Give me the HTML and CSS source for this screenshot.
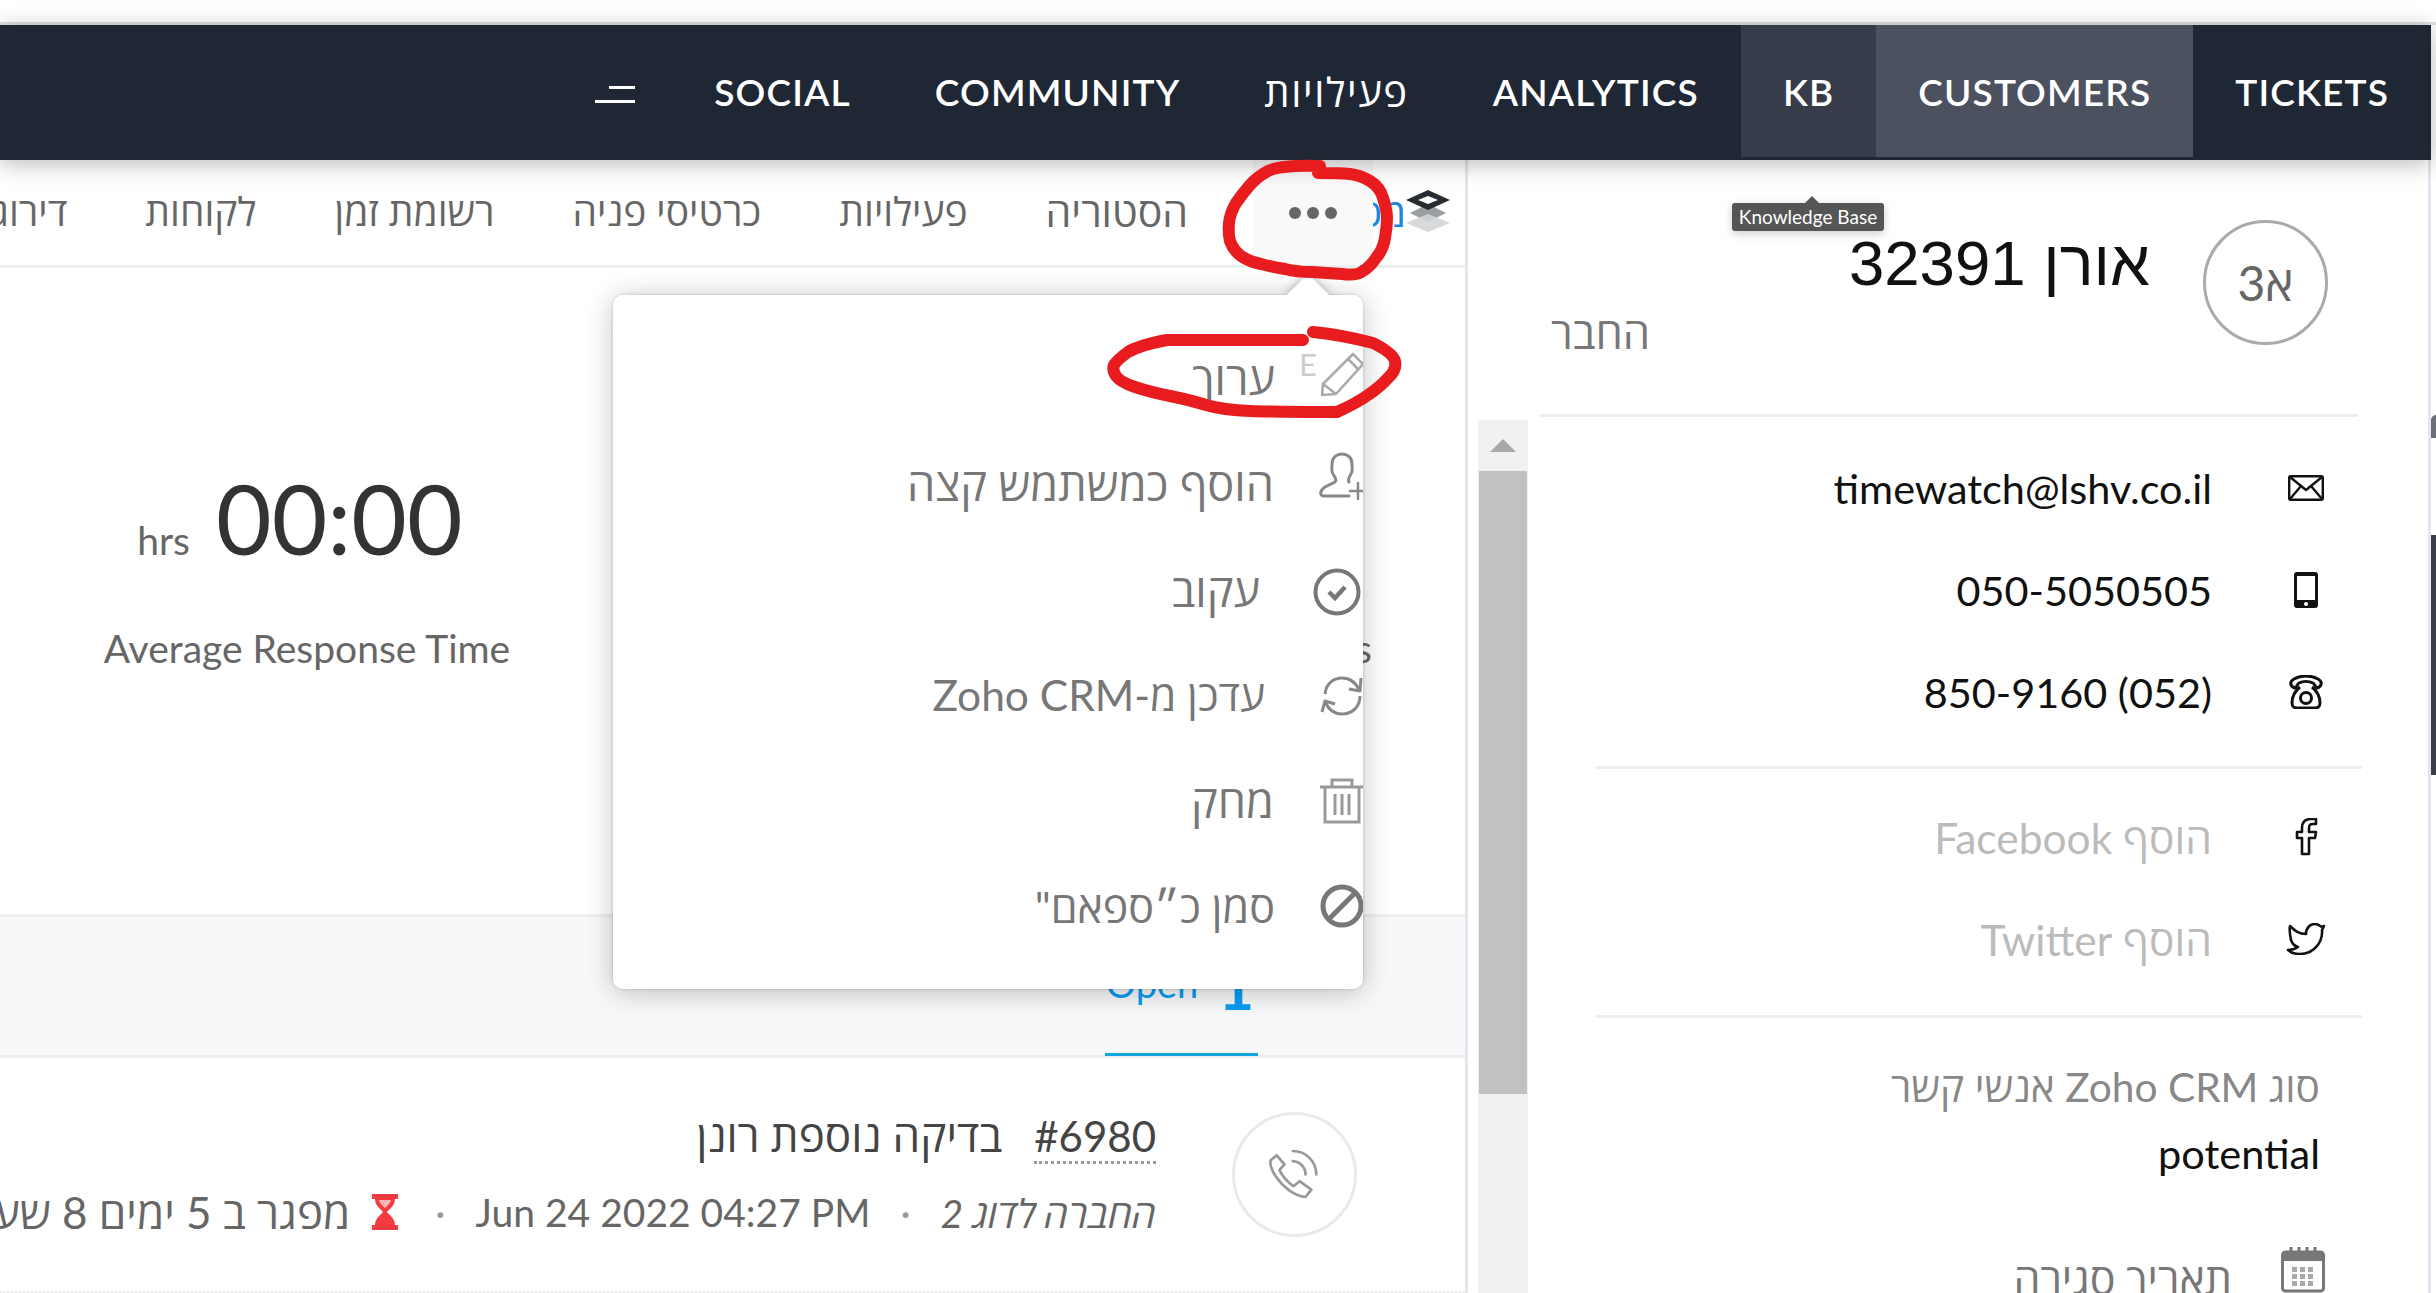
FILE: index.html
```html
<!DOCTYPE html>
<html lang="he">
<head>
<meta charset="utf-8">
<title>Customers</title>
<link rel="stylesheet" href="styles.css">
</head>
<body>
<div class="page">
  <div class="browser-top"></div>
  <nav class="nav">
    <div class="nav-item nav-burger"><span class="burger"><i></i><i></i></span></div>
    <div class="nav-item">SOCIAL</div>
    <div class="nav-item">COMMUNITY</div>
    <div class="nav-item nav-he" dir="rtl">פעילויות</div>
    <div class="nav-item">ANALYTICS</div>
    <div class="nav-item nav-hover">KB</div>
    <div class="nav-item nav-active">CUSTOMERS</div>
    <div class="nav-item">TICKETS</div>
  </nav>
  <div class="layout">
    <main class="main">
      <div class="tabs">
        <div class="tab" dir="rtl">דירוג</div>
        <div class="tab" dir="rtl">לקוחות</div>
        <div class="tab" dir="rtl">רשומת זמן</div>
        <div class="tab" dir="rtl">כרטיסי פניה</div>
        <div class="tab" dir="rtl">פעילויות</div>
        <div class="tab tab-last" dir="rtl">הסטוריה</div>
        <div class="tab-more"><i></i><i></i><i></i></div>
        <div class="tab-clipped" dir="rtl">מכ</div>
        <svg class="stack" viewBox="0 0 44 42" width="44" height="42"><path d="M22 14 40 23 22 32 4 23Z" fill="#9a9ea3"/><path d="M22 24 44 33 22 42 0 33Z" fill="#d3d5d7" opacity=".9"/><path d="M22 0 44 10 22 20 0 10Z" fill="#262c33"/><path d="M22 6 32 10 22 14 12 10Z" fill="#fff"/></svg>
      </div>
      <section class="stats">
        <div class="stat">
          <div class="stat-value"><span class="stat-unit">hrs</span><span class="stat-num">00:00</span></div>
          <div class="stat-label">Average Response Time</div>
        </div>
        <div class="stat stat-hidden">
          <div class="stat-value"></div>
          <div class="stat-label">Tickets</div>
        </div>
      </section>
      <div class="filters">
        <div class="filter-tab"><span class="filter-name">Open</span><span class="filter-count">1</span></div>
      </div>
      <div class="ticket">
        <div class="ticket-text" dir="rtl">
          <div class="ticket-title"><span class="ticket-id" dir="ltr">#6980</span><span class="ticket-subject">בדיקה נוספת רונן</span></div>
          <div class="ticket-meta">
            <em>החברה לדוג 2</em><span class="dot">·</span>
            <span dir="ltr">Jun 24 2022 04:27 PM</span><span class="dot">·</span>
            <svg class="hourglass" viewBox="0 0 26 36" width="26" height="36"><path d="M0 0H26V5H23C23 12 17 15 15 18 17 21 23 24 23 31H26V36H0V31H3C3 24 9 21 11 18 9 15 3 12 3 5H0Z" fill="#f53b3f"/><path d="M7 6H19C18 10 15 12 13 14 11 12 8 10 7 6Z" fill="#fbb6b6"/></svg>
            <span class="overdue">מפגר ב 5 ימים 8 שעות</span>
          </div>
        </div>
        <div class="ticket-channel">
          <svg viewBox="140 140 170 170" width="57" height="57" fill="none" stroke="#999" stroke-width="8" stroke-linejoin="round" stroke-linecap="round"><path d="M172 168 155 182C150 190 155 210 170 232 190 262 225 290 258 292L275 270 240 245 222 260C205 248 190 232 180 212L195 195Z"/><path d="M220 155A70 70 0 0 1 290 225M220 185A40 40 0 0 1 258 225"/></svg>
        </div>
      </div>
    </main>
    <aside class="side">
      <header class="side-head">
        <div class="side-titles">
          <div class="side-name" dir="rtl">אורן 32391</div>
          <div class="side-role" dir="rtl">החבר</div>
        </div>
        <div class="avatar" dir="rtl">א3</div>
      </header>
      <div class="side-body">
        <div class="scrollbar"><div class="scroll-up"></div><div class="scroll-thumb"></div></div>
        <div class="side-content">
          <div class="info-group">
            <div class="info-row"><span>timewatch@lshv.co.il</span>
              <svg class="info-icon" viewBox="0 0 36 26" width="36" height="26" fill="none" stroke="#111" stroke-width="2.4" stroke-linejoin="round"><rect x="1.2" y="1.2" width="33.6" height="23.6" rx="1.5"/><path d="M2 2 18 15 34 2M2 24 13 11M34 24 23 11"/></svg></div>
            <div class="info-row"><span>050-5050505</span>
              <svg class="info-icon" viewBox="0 0 24 36" width="24" height="36"><path fill-rule="evenodd" d="M3 0H21A3 3 0 0 1 24 3V33A3 3 0 0 1 21 36H3A3 3 0 0 1 0 33V3A3 3 0 0 1 3 0ZM3 4V28H21V4Z" fill="#111"/><circle cx="12" cy="32" r="2" fill="#fff"/></svg></div>
            <div class="info-row"><span dir="rtl">(052) 850-9160</span>
              <svg class="info-icon" viewBox="0 0 34 34" width="34" height="34" fill="none" stroke="#111" stroke-width="3"><path d="M6 13C0 11 1 6 5 4 12 0 22 0 29 4 33 6 34 11 28 13 25 11 26 9 24 8 20 6 14 6 10 8 8 9 9 11 6 13Z"/><path d="M11 12C6 16 3 22 3 28 3 31 5 33 8 33H26C29 33 31 31 31 28 31 22 28 16 23 12"/><circle cx="17" cy="23" r="5.5"/></svg></div>
          </div>
          <div class="info-group info-social">
            <div class="info-row muted"><span dir="rtl">הוסף Facebook</span>
              <svg class="info-icon" viewBox="0 0 22 38" width="22" height="38" fill="none" stroke="#111" stroke-width="2.6" stroke-linejoin="round"><path d="M7 36H14V20H20L21 14H14V10C14 7 15 6 18 6H21V1H16C10 1 7 4 7 10V14H2V20H7Z"/></svg></div>
            <div class="info-row muted"><span dir="rtl">הוסף Twitter</span>
              <svg class="info-icon" viewBox="0 0 38 32" width="38" height="32" fill="none" stroke="#111" stroke-width="2.6" stroke-linejoin="round"><path d="M3 3C8 8 12 11 19 11 19 5 23 1 28 1 31 1 33 3 35 4L37 3 35 7C36 20 26 31 13 31 8 31 4 30 1 27 5 27 8 26 11 24 7 23 5 20 4 17 3 12 2 7 3 3Z"/></svg></div>
          </div>
          <div class="info-fields" dir="rtl">
            <div class="field-label">סוג Zoho CRM אנשי קשר</div>
            <div class="field-value">potential</div>
          </div>
          <div class="info-date">
            <span dir="rtl">תאריך סגירה</span>
            <svg class="cal" viewBox="0 0 44 46" width="44" height="46"><rect x="1.5" y="5" width="41" height="39" rx="3" fill="none" stroke="#777" stroke-width="3"/><rect x="1.5" y="5" width="41" height="9" fill="#777"/><path d="M10 0V9M18 0V9M26 0V9M34 0V9" stroke="#777" stroke-width="3"/><path d="M11 20h5v5h-5zM19 20h5v5h-5zM27 20h5v5h-5zM11 27h5v5h-5zM19 27h5v5h-5zM27 27h5v5h-5zM11 34h5v5h-5zM19 34h5v5h-5zM27 34h5v5h-5z" fill="#aaa"/></svg>
          </div>
        </div>
      </div>
    </aside>
  </div>

  <div class="tooltip">Knowledge Base</div>

  <div class="menu">
    <div class="menu-arrow"></div>
    <div class="menu-body">
      <div class="menu-item" dir="rtl">
        <svg class="menu-icon icon-edit" viewBox="0 0 47 47" width="47" height="47" fill="none" stroke="#aaa" stroke-width="2.6" stroke-linejoin="round"><path d="M4 33 34 3 44 13 17 43 3 44Z"/><path d="M29 8 39 18M4 33 17 43"/></svg>
        <span>ערוך</span><span class="menu-key">E</span>
      </div>
      <div class="menu-item" dir="rtl">
        <svg class="menu-icon icon-user" viewBox="0 0 48 48" width="48" height="48" fill="none" stroke="#888" stroke-width="3" stroke-linecap="round"><path d="M31 44H6C1 44 2 38 7 35L17 30C19 28 17 25 15 22 13 19 14 17 14 12 14 5 19 2 24 2 29 2 34 5 34 12 34 17 35 19 33 22 31 25 30 28 31 30"/><path d="M40 31V47M32 39H48" stroke-width="2.5"/></svg>
        <span>הוסף כמשתמש קצה</span>
      </div>
      <div class="menu-item item-follow" dir="rtl">
        <svg class="menu-icon icon-check" viewBox="0 0 48 48" width="48" height="48" fill="none" stroke="#777" stroke-width="4"><circle cx="24" cy="24" r="21.5"/><path d="M16 24 22 30 32 19" stroke-width="4.5"/></svg>
        <span>עקוב</span>
      </div>
      <div class="menu-item item-sync" dir="rtl">
        <svg class="menu-icon icon-low" viewBox="0 0 48 48" width="48" height="48" fill="none" stroke="#888" stroke-width="3"><path d="M7 22C8 12 15 6 24 6 32 6 38 11 41 18"/><path d="M42 24C42 35 34 42 24 42 16 42 10 37 8 31"/><path d="M43 6 42 19 31 17M4 40 7 29 17 32" stroke-linejoin="round"/></svg>
        <span>עדכן מ-Zoho CRM</span>
      </div>
      <div class="menu-item" dir="rtl">
        <svg class="menu-icon icon-low" viewBox="0 0 48 48" width="48" height="48" fill="none" stroke="#999" stroke-width="3"><path d="M2 9H46M14 9V2H34V9M7 9V44H41V9"/><path d="M17 16V37M24 16V37M31 16V37"/></svg>
        <span>מחק</span>
      </div>
      <div class="menu-item item-spam" dir="rtl">
        <svg class="menu-icon" viewBox="0 0 48 48" width="48" height="48" fill="none" stroke="#777" stroke-width="5"><circle cx="24" cy="24" r="19"/><path d="M11 37 37 11"/></svg>
        <span>סמן כ״ספאם"</span>
      </div>
    </div>
  </div>

  <div class="edge-curve"></div>
  <div class="edge-bar"></div>

  <svg class="ink" viewBox="0 0 2436 1293" width="2436" height="1293" fill="none" stroke="#e81c1e" stroke-width="12" stroke-linecap="round" stroke-linejoin="round">
    <path d="M1320 166Q1280 165 1268 171Q1257 177 1250 185Q1243 193 1236 203Q1230 213 1229 223Q1228 233 1230 241Q1233 250 1241 256Q1250 262 1261 264Q1273 267 1285 269Q1297 272 1312 272Q1327 273 1342 274Q1357 276 1363 271Q1370 267 1376 258Q1383 250 1385 238Q1387 227 1387 218Q1387 210 1383 198Q1380 187 1370 181Q1360 175 1350 174Q1340 173 1318 173"/>
    <path d="M1303 340L1167 340Q1140 345 1128 352Q1117 360 1114 365Q1112 370 1116 376Q1120 382 1135 387Q1150 392 1170 396Q1190 400 1206 405Q1223 410 1250 411Q1277 412 1337 412Q1357 403 1368 395Q1380 387 1388 378Q1397 370 1395 361Q1393 353 1373 343Q1343 335 1313 332"/>
  </svg>
</div>
</body>
</html>
```

FILE: styles.css
```css
* { box-sizing: border-box; }
html, body { margin: 0; padding: 0; background: #fff; }
body { font-family: Lato, "Open Sans", "Liberation Sans", sans-serif; color: #666; }
.page { position: relative; width: 2436px; height: 1293px; overflow: hidden; }

.browser-top { height: 25px; border-bottom: 3px solid #dfe1e3; background: #fff; }

.nav { position: relative; z-index: 2; display: flex; justify-content: flex-end; width: 2431px; height: 135px; background: #1f2735; box-shadow: 0 4px 22px rgba(0,0,0,.28); }
.nav-item { height: 132px; padding: 0 42px; display: flex; align-items: center; color: #fff; font-size: 37px; font-weight: 600; letter-spacing: 1.15px; white-space: nowrap; }
.nav-he { font-size: 40px; font-weight: 500; letter-spacing: 1.6px; }
.nav-hover { background: #363c49; }
.nav-active { background: #4b515e; }
.nav-burger { padding: 0 37px 0 0; }
.burger { display: flex; flex-direction: column; align-items: flex-end; gap: 11px; width: 40px; margin-top: 6px; }
.burger i { display: block; height: 3px; background: #fff; }
.burger i:first-child { width: 26px; }
.burger i:last-child { width: 40px; }

.layout { display: flex; width: 2431px; height: 1133px; }
.main { width: 1468px; flex: none; overflow: hidden; border-right: 3px solid #e3e6ee; }

.tabs { display: flex; justify-content: flex-end; align-items: center; height: 108px; padding-right: 15px; border-bottom: 3px solid #eee; }
.tab { flex: none; margin-right: 78px; font-size: 39px; color: #666; white-space: nowrap; padding-bottom: 4px; }
.tab-last { margin-right: 65px; font-size: 41px; }
.tab-more { flex: none; display: flex; align-items: center; justify-content: center; gap: 6px; width: 120px; height: 105px; background: #f9f9f9; }
.tab-more i { display: block; width: 12px; height: 12px; border-radius: 50%; background: #666; }
.tab-clipped { flex: none; width: 33px; overflow: hidden; font-size: 39px; color: #1a86e0; line-height: 1; white-space: nowrap; }
.stack { flex: none; margin-top: -4px; }

.stats { display: flex; justify-content: space-between; height: 646px; }
.stat { flex: none; width: 614px; text-align: center; padding-top: 187px; }
.stat-value { display: flex; justify-content: center; align-items: baseline; gap: 26px; height: 125px; padding-right: 14px; }
.stat-unit { font-size: 39px; color: #666; }
.stat-num { font-size: 96px; line-height: 125px; color: #333; }
.stat-label { margin-top: 43px; font-size: 39px; color: #666; line-height: 50px; }
.stat-hidden { width: auto; margin-right: 93px; text-align: right; }

.filters { display: flex; justify-content: flex-end; height: 144px; padding-right: 207px; background: #f7f8fa; border-top: 3px solid #eee; border-bottom: 3px solid #eee; }
.filter-tab { display: flex; align-items: flex-end; justify-content: center; gap: 20px; width: 153px; height: 139px; padding: 0 3px 45px 0; border-bottom: 3px solid #12a5e0; color: #0a9cf0; margin-bottom: -2px; }
.filter-name { font-size: 38px; line-height: 36px; margin-bottom: 7px; }
.filter-count { font-size: 62px; font-weight: 700; line-height: 48px; margin-bottom: -2px; }

.ticket { display: flex; justify-content: flex-end; gap: 76px; height: 235px; padding: 54px 108px 0 0; border-bottom: 2px dotted #e8e8e8; }
.ticket-text { flex: none; width: 1156px; margin-top: -3px; }
.ticket-title { display: flex; gap: 32px; align-items: baseline; line-height: 52px; color: #444; }
.ticket-id { font-size: 42px; border-bottom: 3px dotted #999; line-height: 44px; padding-bottom: 3px; }
.ticket-subject { font-size: 44px; }
.ticket-meta { display: flex; align-items: center; gap: 30px; margin-top: 18px; font-size: 39px; color: #666; white-space: nowrap; }
.ticket-meta em { font-style: italic; }
.ticket-meta .dot { color: #999; }
.hourglass { flex: none; margin-left: -8px; margin-right: 7px; }
.overdue { flex: none; font-size: 44px; }
.ticket-channel { flex: none; display: flex; align-items: center; justify-content: center; width: 125px; height: 125px; border: 3px solid #eaeaea; border-radius: 50%; }

.side { flex: 1; min-width: 0; border-right: 3px solid #e3e6ee; display: flex; flex-direction: column; }
.side-head { flex: none; display: flex; height: 257px; margin: 0 70px 0 72px; padding: 60px 30px 0 11px; border-bottom: 3px solid #eee; }
.side-titles { flex: 1; }
.side-name { font-family: "Liberation Sans", sans-serif; font-size: 63.5px; line-height: 70px; margin-top: 8px; color: #111; padding-right: 53px; }
.side-role { width: max-content; margin-top: 9px; font-size: 43.5px; color: #777; line-height: 50px; }
.avatar { flex: none; display: flex; align-items: center; justify-content: center; width: 125px; height: 125px; border: 3px solid #aaa; border-radius: 50%; font-size: 48px; color: #666; }

.side-body { flex: 1; display: flex; min-height: 0; padding-left: 10px; }
.scrollbar { flex: none; width: 50px; margin-top: 3px; background: #f1f1f1; padding: 0 1px; }
.scroll-up { height: 51px; position: relative; }
.scroll-up::after { content: ""; position: absolute; left: 11px; top: 19px; border-left: 13px solid transparent; border-right: 13px solid transparent; border-bottom: 13px solid #a8a8a8; }
.scroll-thumb { height: 623px; background: #c1c1c1; }

.side-content { flex: 1; min-width: 0; padding: 20px 66px 0 68px; }
.info-group { padding-bottom: 23px; }
.info-social { border-top: 3px solid #eee; padding-top: 17px; padding-bottom: 25px; }
.info-row { display: flex; justify-content: flex-end; align-items: center; height: 102px; padding-right: 31px; font-size: 41.4px; color: #111; white-space: nowrap; }
.info-row > span { margin-right: 69px; }
.info-row.muted { color: #bbb; font-size: 42.5px; }
.info-icon { flex: none; width: 50px; }

.info-fields { border-top: 3px solid #eee; padding: 44px 42px 0 0; }
.field-label { font-size: 40.7px; line-height: 50px; color: #888; }
.field-value { margin-top: 16px; font-size: 41.5px; line-height: 50px; color: #111; }
.info-date { display: flex; justify-content: flex-end; align-items: flex-start; gap: 49px; padding: 69px 37px 0 0; font-size: 43px; color: #777; }
.info-date span { margin-top: 2px; }
.cal { flex: none; }

.tooltip { position: absolute; z-index: 5; left: 1732px; top: 203px; width: 152px; height: 28px; background: #555; border-radius: 3px; color: #fff; font-size: 19px; line-height: 27px; text-align: center; box-shadow: 0 3px 10px rgba(0,0,0,.2); }
.tooltip::before { content: ""; position: absolute; left: 73px; top: -7px; border-left: 7px solid transparent; border-right: 7px solid transparent; border-bottom: 7px solid #555; }

.menu { position: absolute; z-index: 4; left: 613px; top: 295px; width: 750px; height: 694px; border-radius: 10px; box-shadow: 0 3px 28px rgba(0,0,0,.24), 0 0 3px rgba(0,0,0,.2); }
.menu-body { position: relative; height: 100%; padding-top: 30px; background: #fff; border-radius: 10px; overflow: hidden; }
.menu-arrow { position: absolute; left: 680px; top: -15px; width: 30px; height: 30px; background: #fff; transform: rotate(45deg); box-shadow: 0 0 12px rgba(0,0,0,.3); }
.menu-item { position: relative; display: flex; align-items: center; gap: 44px; height: 105.7px; font-size: 45px; color: #777; white-space: nowrap; }
.menu-icon { flex: none; margin-right: -3px; }
.icon-edit { margin-top: -6px; }
.icon-user { margin-top: -16px; }
.icon-check { margin-top: 6px; margin-right: 2px; }
.icon-low { margin-top: 3px; }
.item-follow { gap: 53px; }
.item-sync { gap: 53px; font-size: 42.5px; }
.item-spam { gap: 43px; font-size: 43px; }
.menu-key { position: absolute; right: 46px; top: 20px; font-size: 31px; color: #ccc; }

.edge-curve { position: absolute; left: 2431px; top: 415px; width: 5px; height: 23px; background: #6d7078; border-radius: 5px 0 0 0; }
.edge-bar { position: absolute; left: 2431px; top: 535px; width: 5px; height: 240px; background: #3a3e48; }
.ink { position: absolute; z-index: 6; left: 0; top: 0; pointer-events: none; }
```
